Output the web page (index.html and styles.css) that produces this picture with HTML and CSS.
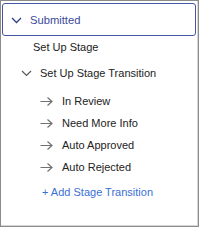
FILE: index.html
```html
<!DOCTYPE html>
<html lang="en">
<head>
    <meta charset="UTF-8">
    <title>Stages</title>
    <link rel="stylesheet" href="styles.css">
</head>
<body>
    <div class="panel">
        <!-- selected stage -->
        <div class="stage-selected">
            <svg class="chev" width="11" height="7" viewBox="0 0 11 7"><path d="M1 1 L5.5 5.5 L10 1" fill="none" stroke="currentColor" stroke-width="1.3"/></svg>
            <span>Submitted</span>
        </div>

        <div class="tree">
            <div class="row row-setup">Set Up Stage</div>

            <div class="row row-trans">
                <svg class="chev" width="11" height="7" viewBox="0 0 11 7"><path d="M1 1 L5.5 5.5 L10 1" fill="none" stroke="currentColor" stroke-width="1.1"/></svg>
                <span>Set Up Stage Transition</span>
            </div>

            <div class="transitions">
                <div class="row row-item">
                    <svg class="arrow" width="13" height="9" viewBox="0 0 13 9"><path d="M0.5 4.5 H12 M7.5 0.5 L12 4.5 L7.5 8.5" fill="none" stroke="currentColor" stroke-width="1.2"/></svg>
                    <span>In Review</span>
                </div>
                <div class="row row-item">
                    <svg class="arrow" width="13" height="9" viewBox="0 0 13 9"><path d="M0.5 4.5 H12 M7.5 0.5 L12 4.5 L7.5 8.5" fill="none" stroke="currentColor" stroke-width="1.2"/></svg>
                    <span>Need More Info</span>
                </div>
                <div class="row row-item">
                    <svg class="arrow" width="13" height="9" viewBox="0 0 13 9"><path d="M0.5 4.5 H12 M7.5 0.5 L12 4.5 L7.5 8.5" fill="none" stroke="currentColor" stroke-width="1.2"/></svg>
                    <span>Auto Approved</span>
                </div>
                <div class="row row-item">
                    <svg class="arrow" width="13" height="9" viewBox="0 0 13 9"><path d="M0.5 4.5 H12 M7.5 0.5 L12 4.5 L7.5 8.5" fill="none" stroke="currentColor" stroke-width="1.2"/></svg>
                    <span>Auto Rejected</span>
                </div>
            </div>

            <a class="row add-link" href="#">+ Add Stage Transition</a>
        </div>
    </div>
</body>
</html>
```

FILE: styles.css
```css
/* base */
body {
    margin: 0;
    font-family: 'Liberation Sans', Arial, sans-serif;
    font-size: 11px;
    color: #222;
    background: #fff;
}

/* outer frame */
.panel {
    width: 199px;
    height: 227px;
    box-sizing: border-box;
    border: 1px solid #8c8c8c;
    box-shadow: inset -1px -1px 0 #d6d6d6;
    background: #fff;
}

/* selected stage */
.stage-selected {
    display: flex;
    align-items: center;
    height: 31px;
    margin: 2px 2px 0 1px;
    padding-left: 8px;
    border: 1.5px solid #4556a6;
    border-radius: 3px;
    color: #3a4a9c;
    font-size: 11.2px;
}

.stage-selected .chev {
    color: #2f3f8a;
    margin-right: 8px;
    margin-top: 1px;
}

/* tree rows */
.row {
    display: flex;
    align-items: center;
    height: 22px;
    line-height: 22px;
}

.row-setup {
    padding-left: 32px;
}

.row-trans {
    margin-top: 4px;
    padding-left: 20px;
}

.row-trans .chev {
    color: #555;
    margin-right: 8px;
}

.transitions {
    margin-top: 6px;
}

.row-item {
    padding-left: 39px;
}

.arrow {
    color: #707070;
    margin-right: 9px;
}

.add-link {
    margin-top: 3px;
    padding-left: 41px;
    color: #3a6fd6;
    text-decoration: none;
}
```
